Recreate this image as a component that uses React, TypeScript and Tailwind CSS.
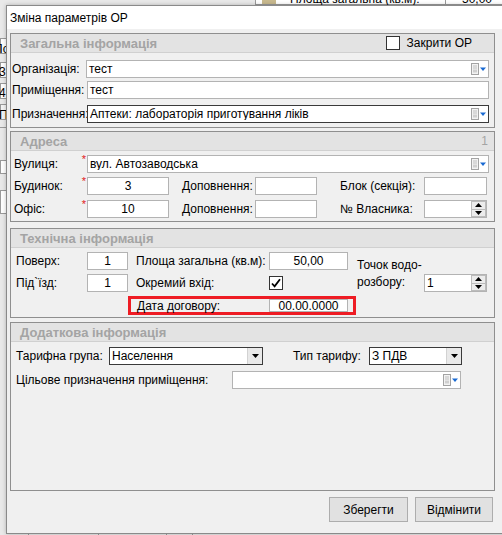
import React from 'react';

// маленька іконка довідника: аркуш + синя стрілка
const LookupIcon: React.FC = () => (
  <svg width="16" height="12" viewBox="0 0 16 12" className="shrink-0 mr-[1px]">
    <rect x="0.5" y="0.5" width="7" height="11" fill="#f2f2f2" stroke="#a3a3a3" />
    <rect x="2" y="2.5" width="4" height="1" fill="#bdbdbd" />
    <rect x="2" y="4.5" width="4" height="1" fill="#bdbdbd" />
    <rect x="2" y="6.5" width="4" height="3" fill="#cfcfcf" />
    <path d="M9 4.5h6l-3 3.5z" fill="#1a6ad2" />
  </svg>
);

const Tri: React.FC<{ up?: boolean }> = ({ up }) => (
  <svg width="7" height="4" viewBox="0 0 7 4">
    <path d={up ? 'M0 4h7L3.5 0z' : 'M0 0h7L3.5 4z'} fill="#000" />
  </svg>
);

const Spinner: React.FC = () => (
  <div className="w-[15px] h-full flex flex-col shrink-0">
    <div className="flex-1 bg-[#ececec] border border-[#bcbcbc] flex items-center justify-center">
      <Tri up />
    </div>
    <div className="flex-1 bg-[#ececec] border border-t-0 border-[#bcbcbc] flex items-center justify-center">
      <Tri />
    </div>
  </div>
);

type FieldProps = {
  className: string;
  value?: string;
  center?: boolean;
  dark?: boolean;
  tail?: React.ReactNode;
};

const Field: React.FC<FieldProps> = ({ className, value, center, dark, tail }) => (
  <div
    className={`${className} bg-white border flex items-center shrink-0 ${
      dark ? 'border-[#3a3a3a]' : 'border-[#b3b3b3]'
    }`}
  >
    <span className={`flex-1 px-[2px] text-[12px] leading-none truncate ${center ? 'text-center' : ''}`}>
      {value}
    </span>
    {tail}
  </div>
);

const Select: React.FC<{ className: string; value: string }> = ({ className, value }) => (
  <div className={`${className} h-[18px] bg-white border border-[#3a3a3a] flex items-center shrink-0`}>
    <span className="flex-1 pl-[2px] text-[12px] leading-none">{value}</span>
    <div className="w-[15px] h-full bg-[#e9e9e9] border-l border-[#d2d2d2] flex items-center justify-center">
      <Tri />
    </div>
  </div>
);

const Check: React.FC<{ checked?: boolean }> = ({ checked }) => (
  <div className="w-[14px] h-[14px] bg-white border border-[#333] flex items-center justify-center shrink-0">
    {checked && (
      <svg width="10" height="10" viewBox="0 0 10 10">
        <path d="M1 5.5l2.6 2.8L9 1.2" fill="none" stroke="#000" strokeWidth="1.8" />
      </svg>
    )}
  </div>
);

const Section: React.FC<{
  title: string;
  aside?: React.ReactNode;
  className?: string;
  children: React.ReactNode;
}> = ({ title, aside, className = '', children }) => (
  <div className={`w-[485px] border border-[#8f8f8f] ${className}`}>
    <div className="h-[19px] bg-[#e3e3e3] border-b border-[#d0d0d0] flex items-center justify-between pl-[9px]">
      <span className="text-[13px] font-bold text-[#a4a4a4] leading-none">{title}</span>
      {aside}
    </div>
    {children}
  </div>
);

const Req: React.FC<{ text: string }> = ({ text }) => (
  <div className="relative w-[76px] pl-[3px] shrink-0">
    {text}
    <span className="absolute right-[1px] top-[-4px] text-[#e02020] text-[11px]">*</span>
  </div>
);

export default function App() {
  return (
    <div className="relative w-[502px] h-[535px] overflow-hidden bg-[#e9e9e9] font-['Liberation_Sans',Arial,sans-serif] text-[12px] text-black">
      {/* форма, що лежить під діалогом */}
      <div className="absolute inset-0">
        <div className="absolute left-[255px] top-[-10px] w-[250px] h-[15px] bg-white border border-[#9a9a9a]" />
        <span className="absolute left-[262px] top-[-10px] w-[14px] h-[14px] bg-[#c8b98e]" />
        <span className="absolute left-[290px] top-[-10px] text-[12px]">Площа загальна (кв.м):</span>
        <span className="absolute left-[445px] top-[-10px] h-[15px] border-l border-[#9a9a9a]" />
        <span className="absolute left-[462px] top-[-10px] text-[12px]">50,00</span>
        <div className="absolute left-0 top-[38px] w-[10px] h-[16px] bg-white border border-[#9a9a9a]" />
        <span className="absolute left-[-6px] top-[40px]">Поз</span>
        <div className="absolute left-0 top-[62px] w-[10px] h-[16px] bg-white border border-[#9a9a9a]" />
        <span className="absolute left-[-1px] top-[63px]">3</span>
        <div className="absolute left-0 top-[83px] w-[10px] h-[16px] bg-white border border-[#9a9a9a]" />
        <span className="absolute left-[-1px] top-[84px]">4.</span>
        <div className="absolute left-0 top-[104px] w-[10px] h-[16px] bg-[#f4f4f4] border border-[#9a9a9a]" />
        <span className="absolute left-[-1px] top-[106px]">П</span>
        <div className="absolute left-0 top-[127px] w-[8px] h-[1px] bg-[#9a9a9a]" />
        <div className="absolute left-0 top-[160px] w-[8px] h-[14px] bg-white border border-[#9a9a9a]" />
        <div className="absolute left-0 top-[190px] w-[8px] h-[24px] bg-white border border-[#9a9a9a]" />
        <div className="absolute left-[28px] top-[533px] h-[4px] border-l border-[#9a9a9a]" />
        <div className="absolute left-[98px] top-[533px] h-[4px] border-l border-[#9a9a9a]" />
        <div className="absolute left-[166px] top-[533px] h-[4px] border-l border-[#9a9a9a]" />
        <div className="absolute left-[192px] top-[533px] h-[4px] border-l border-[#9a9a9a]" />
      </div>

      {/* діалог */}
      <div className="absolute left-[6px] top-[5px] w-[520px] h-[529px] border border-[#8a8a8a] bg-[#f0f0f0] shadow-[0_0_4px_rgba(0,0,0,0.25)] flex flex-col">
        <div className="h-[23px] bg-white flex items-center pl-[3px] text-[12px] shrink-0">Зміна параметрів ОР</div>

        <div className="flex-1 flex flex-col pl-[3px]">
          {/* Загальна інформація */}
          <Section
            title="Загальна інформація"
            className="mt-[4px]"
            aside={
              <div className="flex items-center gap-[7px] pr-[22px]">
                <Check />
                <span className="text-[12px] leading-none">Закрити ОР</span>
              </div>
            }
          >
            <div className="pt-[7px] pb-[4px] flex flex-col">
              <div className="flex items-center h-[18px]">
                <div className="w-[75px] pl-[1px] shrink-0">Організація:</div>
                <Field className="w-[403px] h-[18px]" value="тест" tail={<LookupIcon />} />
              </div>
              <div className="flex items-center h-[18px] mt-[3px]">
                <div className="w-[76px] pl-[1px] shrink-0">Приміщення:</div>
                <Field className="w-[402px] h-[18px]" value="тест" />
              </div>
              <div className="flex items-center h-[18px] mt-[6px]">
                <div className="w-[76px] pl-[1px] shrink-0">Призначення:</div>
                <Field
                  className="w-[402px] h-[18px]"
                  dark
                  value="Аптеки: лабораторія приготування ліків"
                  tail={<LookupIcon />}
                />
              </div>
            </div>
          </Section>

          {/* Адреса */}
          <Section
            title="Адреса"
            className="mt-[3px]"
            aside={<span className="pr-[6px] text-[#a4a4a4] leading-none">1</span>}
          >
            <div className="pt-[4px] pb-[3px] flex flex-col">
              <div className="flex items-center h-[18px]">
                <Req text="Вулиця:" />
                <Field className="w-[402px] h-[18px]" value="вул. Автозаводська" tail={<LookupIcon />} />
              </div>
              <div className="flex items-center h-[18px] mt-[4px]">
                <Req text="Будинок:" />
                <Field className="w-[82px] h-[18px]" value="3" center />
                <div className="w-[73px] ml-[13px] shrink-0">Доповнення:</div>
                <Field className="w-[62px] h-[18px]" />
                <div className="w-[84px] ml-[23px] shrink-0">Блок (секція):</div>
                <Field className="w-[63px] h-[18px]" />
              </div>
              <div className="flex items-center h-[18px] mt-[5px]">
                <Req text="Офіс:" />
                <Field className="w-[82px] h-[18px]" value="10" center />
                <div className="w-[73px] ml-[13px] shrink-0">Доповнення:</div>
                <Field className="w-[62px] h-[18px]" />
                <div className="w-[84px] ml-[23px] shrink-0">№ Власника:</div>
                <Field className="w-[63px] h-[18px]" tail={<Spinner />} />
              </div>
            </div>
          </Section>

          {/* Технічна інформація */}
          <Section title="Технічна інформація" className="mt-[6px]">
            <div className="pt-[4px] pb-[2px] flex">
              <div className="flex flex-col w-[117px] shrink-0">
                <div className="flex items-center h-[18px]">
                  <div className="w-[76px] pl-[5px] shrink-0">Поверх:</div>
                  <Field className="w-[41px] h-[18px]" value="1" center />
                </div>
                <div className="flex items-center h-[18px] mt-[4px]">
                  <div className="w-[76px] pl-[5px] shrink-0">Під`їзд:</div>
                  <Field className="w-[41px] h-[18px]" value="1" center />
                </div>
              </div>

              <div className="flex flex-col w-[228px] shrink-0">
                <div className="flex items-center h-[18px] pl-[8px]">
                  <div className="w-[133px] shrink-0">Площа загальна (кв.м):</div>
                  <Field className="w-[79px] h-[18px]" value="50,00" center />
                </div>
                <div className="flex items-center h-[18px] mt-[4px] pl-[8px]">
                  <div className="w-[133px] shrink-0">Окремий вхід:</div>
                  <Check checked />
                </div>
                <div className="flex items-center h-[19px] mt-[4px] border-[3px] border-[#ee1c24] pl-[6px]">
                  <div className="w-[132px] shrink-0">Дата договору:</div>
                  <Field className="w-[79px] h-[13px]" value="00.00.0000" center />
                </div>
              </div>

              <div className="flex items-start pl-[1px]">
                <div className="w-[67px] mt-[5px] leading-[17px] shrink-0">
                  Точок водо-
                  <br />
                  розбору:
                </div>
                <Field className="w-[63px] h-[18px] mt-[22px]" value="1" tail={<Spinner />} />
              </div>
            </div>
          </Section>

          {/* Додаткова інформація */}
          <Section title="Додаткова інформація" className="mt-[4px] h-[169px]">
            <div className="pt-[5px] flex flex-col">
              <div className="flex items-center h-[18px]">
                <div className="w-[98px] pl-[5px] shrink-0">Тарифна група:</div>
                <Select className="w-[154px]" value="Населення" />
                <div className="w-[76px] ml-[30px] shrink-0">Тип тарифу:</div>
                <Select className="w-[93px]" value="З ПДВ" />
              </div>
              <div className="flex items-center h-[18px] mt-[6px]">
                <div className="w-[221px] pl-[5px] shrink-0">Цільове призначення приміщення:</div>
                <Field className="w-[229px] h-[18px]" tail={<LookupIcon />} />
              </div>
            </div>
          </Section>

          <div className="w-[485px] flex justify-end gap-[7px] mt-[6px] pr-[2px]">
            <button className="w-[79px] h-[25px] bg-[#e1e1e1] border border-[#adadad] text-[12px]">Зберегти</button>
            <button className="w-[78px] h-[25px] bg-[#e1e1e1] border border-[#adadad] text-[12px]">Відмінити</button>
          </div>
        </div>
      </div>
    </div>
  );
}
